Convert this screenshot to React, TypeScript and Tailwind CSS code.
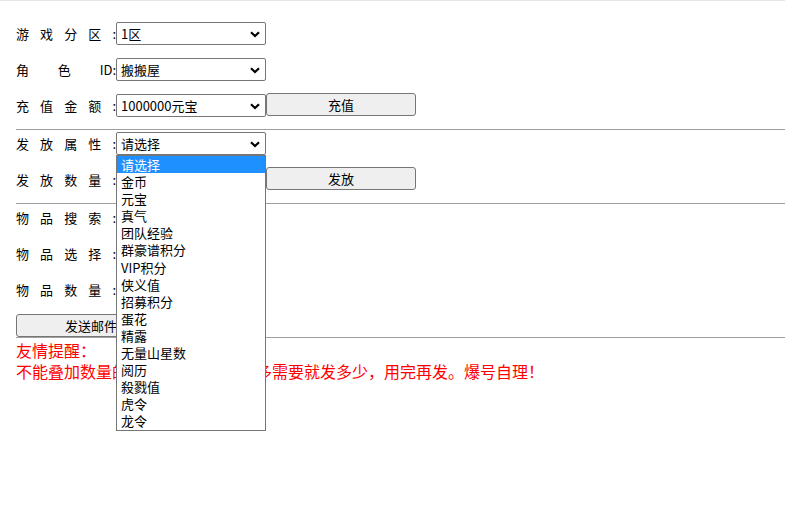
import React from 'react';

const options = [
  '请选择', '金币', '元宝', '真气', '团队经验', '群豪谱积分', 'VIP积分', '侠义值',
  '招募积分', '蛋花', '精露', '无量山星数', '阅历', '殺戮值', '虎令', '龙令',
];

function Label({ parts }: { parts: string[] }) {
  return (
    <div className="flex w-[100px] justify-between">
      {parts.map((p, i) => (
        <span key={i}>{p}</span>
      ))}
    </div>
  );
}

function Chevron() {
  return (
    <svg width="10" height="7" viewBox="0 0 10 7" className="absolute right-[5px] top-[8px]">
      <path d="M1 1.2 L5 5 L9 1.2" fill="none" stroke="#000" strokeWidth="2.2" />
    </svg>
  );
}

function FakeSelect({ value, children }: { value: string; children?: React.ReactNode }) {
  return (
    <div className="relative h-[23px] w-[150px] rounded-[2px] border border-[#767676] bg-white pl-[4px] leading-[21px]">
      {value}
      <Chevron />
      {children}
    </div>
  );
}

function Button({ text }: { text: string }) {
  return (
    <button className="h-[23px] w-[150px] rounded-[3px] border border-[#767676] bg-[#efefef] text-[13px] leading-[21px] text-black">
      {text}
    </button>
  );
}

function TextBox() {
  return <div className="h-[23px] w-[150px] rounded-[2px] border border-[#767676] bg-white" />;
}

export default function App() {
  return (
    <div className="min-h-[516px] w-full border-t border-[#e5e5e5] bg-white font-['Noto_Sans_CJK_SC',sans-serif] text-[13px] text-black">
      <div className="pl-4 pt-[21px]">
        <div className="mb-[13px] flex h-[23px] items-center">
          <Label parts={['游', '戏', '分', '区', ':']} />
          <FakeSelect value="1区" />
        </div>
        <div className="mb-[13px] flex h-[23px] items-center">
          <Label parts={['角', '色', 'ID:']} />
          <FakeSelect value="搬搬屋" />
        </div>
        <div className="flex h-[23px] items-center">
          <Label parts={['充', '值', '金', '额', ':']} />
          <FakeSelect value="1000000元宝" />
          <div className="-mt-[2px]">
            <Button text="充值" />
          </div>
        </div>

        <div className="mb-[2px] mt-3 h-px bg-[#a0a0a0]" />

        <div className="relative z-10 mb-[13px] flex h-[23px] items-center">
          <Label parts={['发', '放', '属', '性', ':']} />
          <FakeSelect value="请选择">
            {/* open dropdown list */}
            <div className="absolute left-[-1px] top-[22px] w-[150px] border border-[#767676] bg-white">
              {options.map((o, i) => (
                <div
                  key={o}
                  className={`h-[17.1px] pl-[4px] leading-[17px] ${i === 0 ? 'bg-[#1e90ff] text-white' : 'text-black'}`}
                >
                  {o}
                </div>
              ))}
            </div>
          </FakeSelect>
        </div>
        <div className="flex h-[23px] items-center">
          <Label parts={['发', '放', '数', '量', ':']} />
          <TextBox />
          <div className="-mt-[2px]">
            <Button text="发放" />
          </div>
        </div>

        <div className="mb-[2px] mt-3 h-px bg-[#a0a0a0]" />

        <div className="mb-[13px] flex h-[23px] items-center">
          <Label parts={['物', '品', '搜', '索', ':']} />
          <TextBox />
        </div>
        <div className="mb-[13px] flex h-[23px] items-center">
          <Label parts={['物', '品', '选', '择', ':']} />
          <FakeSelect value="" />
        </div>
        <div className="mb-[13px] flex h-[23px] items-center">
          <Label parts={['物', '品', '数', '量', ':']} />
          <TextBox />
        </div>
        <div className="flex h-[23px] items-center">
          <Button text="发送邮件" />
        </div>

        <div className="h-px bg-[#a0a0a0]" />

        <div className="mt-[2px] text-[16px] leading-[21px] text-[#ff0000]">
          <div>友情提醒：</div>
          <div>不能叠加数量的物品一次不要发太多需要就发多少，用完再发。爆号自理！</div>
        </div>
      </div>
    </div>
  );
}
